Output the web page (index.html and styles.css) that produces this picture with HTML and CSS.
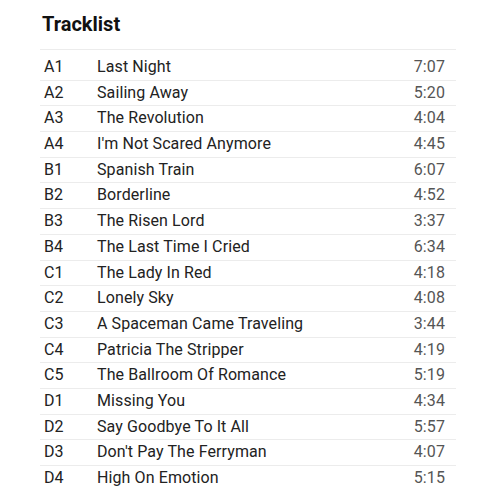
FILE: index.html
```html
<!DOCTYPE html>
<html lang="en">
<head>
    <meta charset="UTF-8">
    <title>Tracklist</title>
    <link rel="stylesheet" href="styles.css">
</head>
<body>
    <div class="tracklist">
        <h2>Tracklist</h2>
        <ul class="tracks">
            <li class="track"><span class="pos">A1</span><span class="name">Last Night</span><span class="time">7:07</span></li>
            <li class="track"><span class="pos">A2</span><span class="name">Sailing Away</span><span class="time">5:20</span></li>
            <li class="track"><span class="pos">A3</span><span class="name">The Revolution</span><span class="time">4:04</span></li>
            <li class="track"><span class="pos">A4</span><span class="name">I'm Not Scared Anymore</span><span class="time">4:45</span></li>
            <li class="track"><span class="pos">B1</span><span class="name">Spanish Train</span><span class="time">6:07</span></li>
            <li class="track"><span class="pos">B2</span><span class="name">Borderline</span><span class="time">4:52</span></li>
            <li class="track"><span class="pos">B3</span><span class="name">The Risen Lord</span><span class="time">3:37</span></li>
            <li class="track"><span class="pos">B4</span><span class="name">The Last Time I Cried</span><span class="time">6:34</span></li>
            <li class="track"><span class="pos">C1</span><span class="name">The Lady In Red</span><span class="time">4:18</span></li>
            <li class="track"><span class="pos">C2</span><span class="name">Lonely Sky</span><span class="time">4:08</span></li>
            <li class="track"><span class="pos">C3</span><span class="name">A Spaceman Came Traveling</span><span class="time">3:44</span></li>
            <li class="track"><span class="pos">C4</span><span class="name">Patricia The Stripper</span><span class="time">4:19</span></li>
            <li class="track"><span class="pos">C5</span><span class="name">The Ballroom Of Romance</span><span class="time">5:19</span></li>
            <li class="track"><span class="pos">D1</span><span class="name">Missing You</span><span class="time">4:34</span></li>
            <li class="track"><span class="pos">D2</span><span class="name">Say Goodbye To It All</span><span class="time">5:57</span></li>
            <li class="track"><span class="pos">D3</span><span class="name">Don't Pay The Ferryman</span><span class="time">4:07</span></li>
            <li class="track"><span class="pos">D4</span><span class="name">High On Emotion</span><span class="time">5:15</span></li>
        </ul>
    </div>
</body>
</html>
```

FILE: styles.css
```css
* {
    margin: 0;
    padding: 0;
    box-sizing: border-box;
}

body {
    font-family: Roboto, "Liberation Sans", sans-serif;
    background: #fff;
    color: #222;
}

.tracklist {
    width: 456px;
    padding-left: 40px;
}

.tracklist h2 {
    font-size: 20px;
    font-weight: 700;
    line-height: 24px;
    margin: 12px 0 13px 2px;
    color: #111;
}

.tracks {
    list-style: none;
    border-top: 1px solid #ececec;
    padding-top: 5px;
}

.track {
    display: flex;
    font-size: 16px;
    letter-spacing: 0.1px;
    line-height: 24.69px;
    padding: 0 11px 0 4px;
    border-bottom: 1px solid #ececec;
}

.track:last-child {
    border-bottom: none;
}

.pos {
    width: 53px;
}

.time {
    margin-left: auto;
    color: #555;
}
```
